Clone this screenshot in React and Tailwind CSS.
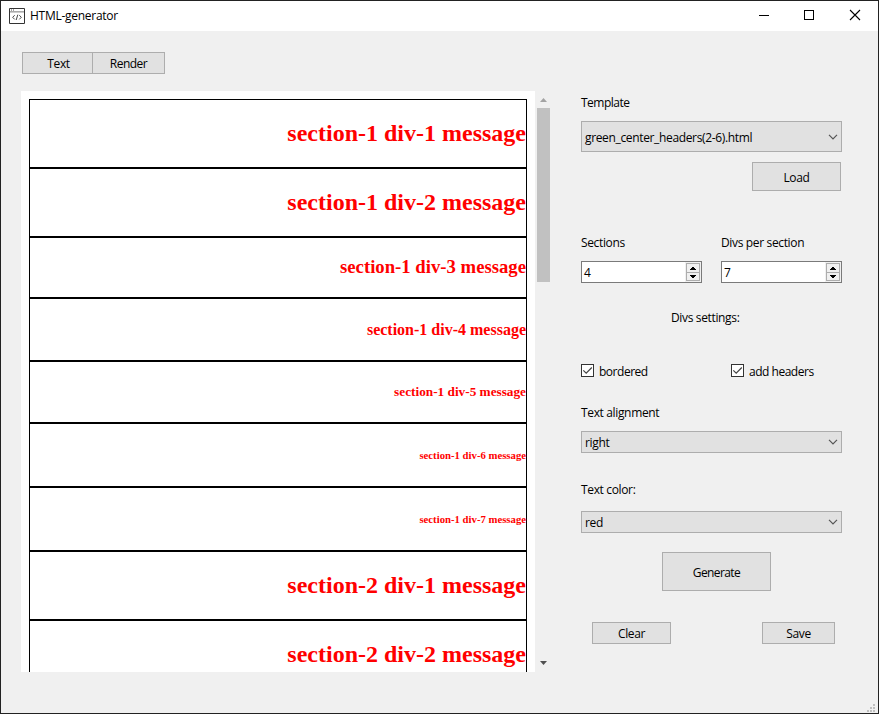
import React from "react";

const rows = [
  { t: "section-1 div-1 message", c: "h-[69px] pb-[2px] text-[24px]" },
  { t: "section-1 div-2 message", c: "h-[69px] pb-[2px] text-[24px]" },
  { t: "section-1 div-3 message", c: "h-[61px] pb-px text-[18.72px]" },
  { t: "section-1 div-4 message", c: "h-[63px] text-[16px]" },
  { t: "section-1 div-5 message", c: "h-[62px] text-[13.28px]" },
  { t: "section-1 div-6 message", c: "h-[64px] text-[10.72px]" },
  { t: "section-1 div-7 message", c: "h-[64px] text-[10.72px]" },
  { t: "section-2 div-1 message", c: "h-[69px] pb-[2px] text-[24px]" },
  { t: "section-2 div-2 message", c: "h-[69px] pb-[2px] text-[24px]" },
];

function Button({ className, children }) {
  return (
    <button className={"flex items-center justify-center border border-[#adadad] bg-[#e1e1e1] " + className}>
      <span className="translate-y-px">{children}</span>
    </button>
  );
}

function Select({ className, children }) {
  return (
    <div className={"flex w-[261px] items-center justify-between border border-[#adadad] bg-[#e1e1e1] pr-[3px] pl-[3px] " + className}>
      <span className="translate-y-px">{children}</span>
      <svg width="10" height="6" viewBox="0 0 10 6" fill="none" stroke="#555" strokeWidth="1.2">
        <path d="M1 .8 5 4.8 9 .8" />
      </svg>
    </div>
  );
}

function Spin({ value }) {
  return (
    <div className="flex h-[22px] w-[121px] justify-between border border-[#7a7a7a] bg-white">
      <span className="pt-[3px] pl-[2px] leading-4">{value}</span>
      <div className="flex w-4 flex-col bg-[#f0f0f0] p-px">
        <div className="flex h-[10px] w-[14px] items-center justify-center border border-[#adadad]">
          <svg width="6" height="3" viewBox="0 0 6 3" shapeRendering="crispEdges">
            <path d="M2 0h2v1h1v1h1v1H0V2h1V1h1z" />
          </svg>
        </div>
        <div className="-mt-px flex h-[9px] w-[14px] items-center justify-center border border-[#adadad]">
          <svg width="6" height="3" viewBox="0 0 6 3" shapeRendering="crispEdges">
            <path d="M0 0h6v1H5v1H4v1H2V2H1V1H0z" />
          </svg>
        </div>
      </div>
    </div>
  );
}

function Check({ children }) {
  return (
    <label className="flex h-[14px] items-center gap-[5px] tracking-[-0.48px]">
      <svg width="13" height="13" viewBox="0 0 13 13" fill="none">
        <rect x=".5" y=".5" width="12" height="12" fill="#fff" stroke="#333" />
        <path d="M2.3 6.4 5.2 9.2 10.8 3.5" stroke="#444" strokeWidth="1.2" />
      </svg>
      <span className="translate-y-[2px]">{children}</span>
    </label>
  );
}

export default function App() {
  return (
    <div className="flex h-[714px] w-[879px] flex-col overflow-hidden border border-[#222] bg-[#f0f0f0] font-['Open_Sans','Noto_Sans',sans-serif] text-[12px] leading-4 tracking-[-0.35px] whitespace-nowrap text-black">
      <header className="flex h-[30px] shrink-0 items-center bg-white pl-2">
        <svg width="16" height="16" viewBox="0 0 16 16" fill="none">
          <path d="M.5 .5h15v15H.5z" fill="#fff" stroke="#333" />
          <path d="M1 3h14v1.6H1z" fill="#aaa" />
          <path d="M2 2h1M4 2h1" stroke="#444" />
          <path d="M5.7 7.2 3.7 9.3l2 2.1M10.3 7.2l2 2.1-2 2.1M8.8 6.7 7.2 12" stroke="#333" strokeWidth=".9" />
        </svg>
        <span className="ml-[5px] flex-1 tracking-[-0.27px]">HTML-generator</span>
        <svg width="119" height="30" viewBox="0 0 119 30" fill="none" stroke="#000">
          <path d="M0 14.5h10M45.5 9.5h9v9h-9z" shapeRendering="crispEdges" />
          <path d="M91 9l10 10M101 9l-10 10" strokeWidth="1.1" />
        </svg>
      </header>
      <main className="flex flex-1">
        <section className="ml-5 w-[533px] pt-[21px]">
          <div className="ml-px flex">
            <Button className="h-[22px] w-[70px] border-r-0">
              <span className="ml-[2px]">Text</span>
            </Button>
            <Button className="h-[22px] w-[73px] tracking-[-0.5px]">Render</Button>
          </div>
          <div className="mt-[17px] flex h-[581px]">
            <div className="h-full w-[514px] overflow-hidden bg-white px-2 pt-2 font-['Liberation_Serif',serif] font-bold tracking-normal text-[#f00]">
              {rows.map((r) => (
                <div key={r.t} className={"flex w-[498px] items-center justify-end border border-black " + r.c}>
                  <span>{r.t}</span>
                </div>
              ))}
            </div>
            <div className="flex w-[17px] flex-col items-center justify-between pt-[7px] pb-[7px]">
              <div className="flex flex-col items-center gap-[6px]">
                <svg width="7" height="4" viewBox="0 0 7 4">
                  <path d="M0 4 3.5 0 7 4z" fill="#a3a3a3" />
                </svg>
                <div className="h-[174px] w-[13px] bg-[#c1c1c1]" />
              </div>
              <svg width="7" height="4" viewBox="0 0 7 4">
                <path d="M0 0 3.5 4 7 0z" fill="#505050" />
              </svg>
            </div>
          </div>
        </section>
        <aside className="ml-[27px] flex w-[261px] flex-col pt-[64px]">
          <span className="tracking-[-0.5px]">Template</span>
          <Select className="mt-[10px] h-[31px]">green_center_headers(2-6).html</Select>
          <Button className="mt-[10px] mr-px h-[29px] w-[89px] self-end">Load</Button>
          <div className="mt-[44px] flex w-[261px] justify-between">
            <div className="flex w-[121px] flex-col gap-[10px]">
              <span>Sections</span>
              <Spin value="4" />
            </div>
            <div className="flex w-[121px] flex-col gap-[10px]">
              <span>Divs per section</span>
              <Spin value="7" />
            </div>
          </div>
          <span className="mt-[27px] ml-[90px]">Divs settings:</span>
          <div className="mt-[37px] flex">
            <div className="w-[150px]">
              <Check>bordered</Check>
            </div>
            <Check>add headers</Check>
          </div>
          <span className="mt-[28px]">Text alignment</span>
          <Select className="mt-[10px] h-[22px]">right</Select>
          <span className="mt-[29px]">Text color:</span>
          <Select className="mt-[13px] h-[22px]">red</Select>
          <Button className="mt-[19px] ml-[81px] h-[39px] w-[109px] tracking-[-0.6px]">Generate</Button>
          <div className="mt-[31px] mr-[7px] ml-[11px] flex justify-between">
            <Button className="h-[22px] w-[79px]">Clear</Button>
            <Button className="h-[22px] w-[73px]">Save</Button>
          </div>
        </aside>
        <div className="mt-auto mb-px ml-auto pr-[3px]">
          <svg width="8" height="8" viewBox="0 0 8 8" fill="#bfbfbf">
            <path d="M6 0h2v2H6zM3 3h2v2H3zM6 3h2v2H6zM0 6h2v2H0zM3 6h2v2H3zM6 6h2v2H6z" />
          </svg>
        </div>
      </main>
    </div>
  );
}
